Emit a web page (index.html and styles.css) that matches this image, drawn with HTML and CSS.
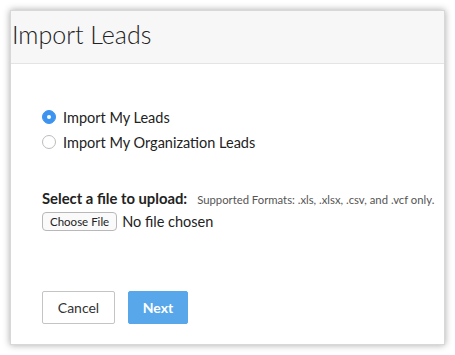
FILE: index.html
```html
<!DOCTYPE html>
<html lang="en">
<head>
    <meta charset="UTF-8">
    <title>Import Leads</title>
    <link rel="stylesheet" href="styles.css">
</head>
<body>
    <div class="dialog">
        <div class="dialog-header">
            <h1>Import Leads</h1>
        </div>
        <div class="dialog-body">
            <div class="radio-list">
                <label class="radio-row">
                    <span class="radio checked"></span>
                    Import My Leads
                </label>
                <label class="radio-row">
                    <span class="radio"></span>
                    Import My Organization Leads
                </label>
            </div>

            <div class="upload">
                <div class="upload-label">
                    <strong>Select a file to upload:</strong>
                    <span class="formats">Supported Formats: .xls, .xlsx, .csv, and .vcf only.</span>
                </div>
                <div class="file-row">
                    <span class="file-button">Choose File</span>
                    <span class="file-name">No file chosen</span>
                </div>
            </div>

            <div class="actions">
                <button class="btn btn-cancel">Cancel</button>
                <button class="btn btn-next">Next</button>
            </div>
        </div>
    </div>
</body>
</html>
```

FILE: styles.css
```css
* {
    margin: 0;
    padding: 0;
    box-sizing: border-box;
}

body {
    background: #ffffff;
    padding: 10px;
    font-family: "Lato", "Open Sans", sans-serif;
    color: #222;
}

.dialog {
    width: 435px;
    height: 335px;
    background: #fff;
    border: 1px solid #d8d8d8;
    box-shadow: 0 0 7px rgba(0, 0, 0, 0.35);
}

.dialog-header {
    height: 53px;
    background: #f7f7f7;
    border-bottom: 1px solid #e4e4e4;
    display: flex;
    align-items: center;
    padding-left: 1px;
}

.dialog-header h1 {
    font-size: 25px;
    font-weight: 300;
    color: #222;
    margin-top: -6px;
}

.dialog-body {
    padding: 44px 0 0 31px;
}

.radio-list {
    display: flex;
    flex-direction: column;
    gap: 7px;
}

.radio-row {
    display: flex;
    align-items: center;
    gap: 7px;
    font-size: 14.5px;
    height: 18px;
    color: #222;
}

.radio {
    width: 14px;
    height: 14px;
    border-radius: 50%;
    border: 1px solid #bcbcbc;
    background: #fff;
    position: relative;
}

.radio.checked {
    background: #3d94f0;
    border-color: #3d94f0;
}

.radio.checked::after {
    content: "";
    position: absolute;
    left: 4px;
    top: 4px;
    width: 4px;
    height: 4px;
    border-radius: 50%;
    background: #fff;
}

.upload {
    margin-top: 38px;
}

.upload-label {
    display: flex;
    align-items: baseline;
    gap: 10px;
}

.upload-label strong {
    font-size: 14.8px;
    font-weight: 700;
}

.formats {
    font-size: 11.3px;
    color: #555;
}

.file-row {
    display: flex;
    align-items: center;
    gap: 5px;
    margin-top: 5px;
}

.file-button {
    display: inline-block;
    font-size: 11.5px;
    padding: 2px 7px;
    border: 1px solid #b8b8b8;
    border-radius: 4px;
    background: #fafafa;
    color: #222;
}

.file-name {
    font-size: 14.5px;
}

.actions {
    display: flex;
    gap: 13px;
    margin-top: 60px;
}

.btn {
    font-family: inherit;
    font-size: 14px;
    height: 33px;
    border-radius: 2px;
    cursor: pointer;
}

.btn-cancel {
    width: 73px;
    background: #fff;
    border: 1px solid #c4c4c4;
    color: #333;
}

.btn-next {
    width: 60px;
    background: #57a7ea;
    border: 1px solid #57a7ea;
    color: #fff;
    font-weight: 700;
}
```
